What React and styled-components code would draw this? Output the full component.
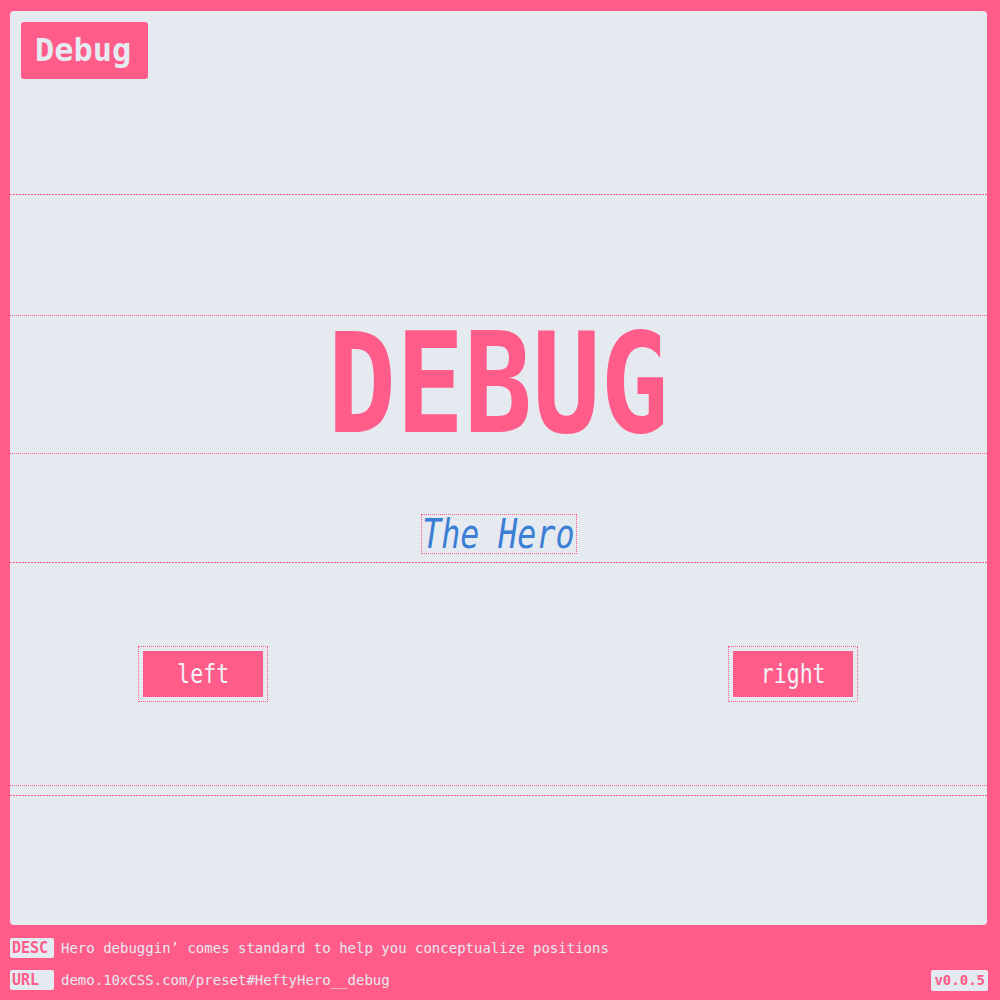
import React from 'react';
import styled, { createGlobalStyle } from 'styled-components';

const pink = '#ff5c8a';
const snow = '#e5e9f0';
const blue = '#3a7fd5';
const mono = '"DejaVu Sans Mono", "Liberation Mono", monospace';

const GlobalStyle = createGlobalStyle`
  html, body {
    margin: 0;
    padding: 0;
    background: ${pink};
  }
  body {
    font-family: ${mono};
  }
`;

const Page = styled.div`
  width: 1000px;
  height: 1000px;
  box-sizing: border-box;
  padding: 11px 12px 0 10px;
  display: flex;
  flex-direction: column;
  background: ${pink};
`;

const Panel = styled.main`
  flex: 1;
  margin-right: 1px;
  display: flex;
  flex-direction: column;
  background: ${snow};
  border-radius: 4px;
  overflow: hidden;
`;

const TopBar = styled.div`
  display: flex;
  padding: 11px 11px 0;
`;

const Badge = styled.div`
  height: 57px;
  padding: 0 17px 0 14px;
  background: ${pink};
  color: ${snow};
  border-radius: 3px;
  font-weight: bold;
  font-size: 32px;
  line-height: 57px;
`;

// the denser debug rules (two dotted outlines on top of each other)
const Rule = styled.div`
  height: 1px;
  flex-shrink: 0;
  margin-top: ${p => p.$gap || 0}px;
  background: repeating-linear-gradient(90deg, ${pink} 0 2px, transparent 2px 3px);
`;

const HeroBody = styled.section`
  padding-top: 120px;
  display: flex;
  flex-direction: column;
`;

const Heading = styled.h1`
  margin: 0;
  height: 137px;
  border-top: 1px dotted ${pink};
  border-bottom: 1px dotted ${pink};
  text-align: center;
  color: ${pink};
  font-size: 139px;
  font-weight: bold;
  line-height: 137px;
  white-space: nowrap;
`;

const SubRow = styled.div`
  display: flex;
  justify-content: center;
  padding: 60px 0 8px;
`;

const SubTitle = styled.h2`
  margin: 0;
  width: 154px;
  height: 38px;
  display: flex;
  justify-content: center;
  border: 1px dotted ${pink};
  color: ${blue};
  font-size: 40px;
  font-style: italic;
  font-weight: normal;
  line-height: 38px;
`;

const Squeeze = styled.span`
  display: inline-block;
  white-space: nowrap;
  transform: scaleX(${p => p.$x});
`;

const ButtonRow = styled.div`
  height: 222px;
  display: flex;
  align-items: center;
  justify-content: space-between;
  padding: 0 129px 0 128px;
  border-bottom: 1px dotted ${pink};
`;

const ButtonFrame = styled.div`
  padding: 4px;
  border: 1px dotted ${pink};
`;

const Button = styled.button`
  width: 120px;
  height: 46px;
  display: flex;
  justify-content: center;
  padding: 0;
  border: none;
  background: ${pink};
  color: #f3f2f7;
  font-family: ${mono};
  font-size: 26px;
  line-height: 46px;
  cursor: pointer;
`;

const Footer = styled.footer`
  height: 75px;
  box-sizing: border-box;
  padding-top: 13px;
  display: flex;
  flex-direction: column;
  gap: 12px;
  flex-shrink: 0;
`;

const FootRow = styled.div`
  display: flex;
  align-items: center;
  gap: 7px;
  height: 20px;
`;

const Label = styled.span`
  width: 44px;
  height: 20px;
  box-sizing: border-box;
  padding-left: 2px;
  background: ${snow};
  color: ${pink};
  border-radius: 2px;
  font-size: 15px;
  font-weight: bold;
  line-height: 20px;
`;

const FootText = styled.span`
  color: ${snow};
  font-size: 14px;
  line-height: 20px;
  white-space: nowrap;
`;

const Version = styled.span`
  margin-left: auto;
  padding: 0 3px;
  height: 21px;
  background: ${snow};
  color: ${pink};
  border-radius: 2px;
  font-size: 14px;
  font-weight: bold;
  line-height: 21px;
`;

export default function App() {
  return (
    <>
      <GlobalStyle/>
      <Page>
        <Panel>
          <TopBar>
            <Badge>Debug</Badge>
          </TopBar>
          <Rule $gap={115}/>
          <HeroBody>
            <Heading><Squeeze $x={0.815}>DEBUG</Squeeze></Heading>
            <SubRow>
              <SubTitle><Squeeze $x={0.79}>The Hero</Squeeze></SubTitle>
            </SubRow>
          </HeroBody>
          <Rule/>
          <ButtonRow>
            <ButtonFrame>
              <Button><Squeeze $x={0.83}>left</Squeeze></Button>
            </ButtonFrame>
            <ButtonFrame>
              <Button><Squeeze $x={0.83}>right</Squeeze></Button>
            </ButtonFrame>
          </ButtonRow>
          <Rule $gap={9}/>
        </Panel>
        <Footer>
          <FootRow>
            <Label>DESC</Label>
            <FootText>Hero debuggin’ comes standard to help you conceptualize positions</FootText>
          </FootRow>
          <FootRow>
            <Label>URL</Label>
            <FootText>demo.10xCSS.com/preset#HeftyHero__debug</FootText>
            <Version>v0.0.5</Version>
          </FootRow>
        </Footer>
      </Page>
    </>
  );
}
